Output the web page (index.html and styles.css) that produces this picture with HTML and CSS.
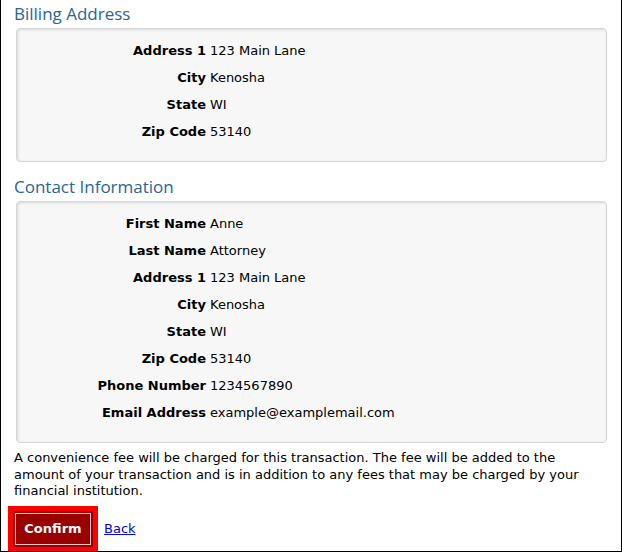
FILE: index.html
```html
<!DOCTYPE html>
<html>
<head>
<meta charset="utf-8">
<link rel="stylesheet" href="styles.css">
</head>
<body>
<div class="page">
  <h2 class="section-title">Billing Address</h2>
  <div class="panel">
    <div class="row"><span class="label">Address 1</span><span class="value">123 Main Lane</span></div>
    <div class="row"><span class="label">City</span><span class="value">Kenosha</span></div>
    <div class="row"><span class="label">State</span><span class="value">WI</span></div>
    <div class="row"><span class="label">Zip Code</span><span class="value">53140</span></div>
  </div>
  <h2 class="section-title">Contact Information</h2>
  <div class="panel">
    <div class="row"><span class="label">First Name</span><span class="value">Anne</span></div>
    <div class="row"><span class="label">Last Name</span><span class="value">Attorney</span></div>
    <div class="row"><span class="label">Address 1</span><span class="value">123 Main Lane</span></div>
    <div class="row"><span class="label">City</span><span class="value">Kenosha</span></div>
    <div class="row"><span class="label">State</span><span class="value">WI</span></div>
    <div class="row"><span class="label">Zip Code</span><span class="value">53140</span></div>
    <div class="row"><span class="label">Phone Number</span><span class="value">1234567890</span></div>
    <div class="row"><span class="label">Email Address</span><span class="value">example@examplemail.com</span></div>
  </div>
  <p class="notice">A convenience fee will be charged for this transaction. The fee will be added to the amount of your transaction and is in addition to any fees that may be charged by your financial institution.</p>
  <div class="actions">
    <button class="confirm" type="button">Confirm</button>
    <a class="back" href="#">Back</a>
  </div>
</div>
</body>
</html>
```

FILE: styles.css
```css
html, body {
  margin: 0;
  padding: 0;
  background: #fff;
}
.page {
  box-sizing: border-box;
  width: 622px;
  height: 552px;
  border: 1px solid #000;
  border-top: none;
  padding: 0 14px 0 13px;
  font-family: "DejaVu Sans", Verdana, sans-serif;
  font-size: 13px;
  color: #000;
  overflow: hidden;
}
.section-title {
  margin: 0;
  padding-top: 4px;
  height: 28px;
  box-sizing: border-box;
  font-family: "Open Sans", "Noto Sans", sans-serif;
  font-weight: normal;
  font-size: 17px;
  line-height: 20px;
  color: #2a6496;
}
.panel + .section-title {
  margin-top: 11px;
}
.panel {
  margin-left: 2px;
  width: 591px;
  box-sizing: border-box;
  background: #f7f7f7;
  border: 1px solid #d6d6d6;
  border-radius: 4px;
  box-shadow: inset 1px 1px 3px rgba(0,0,0,0.12);
  padding: 8px 0 16px;
}
.row {
  display: grid;
  grid-template-columns: 189px 1fr;
  column-gap: 4px;
  height: 27px;
  line-height: 27px;
}
.label {
  text-align: right;
  font-weight: bold;
}
.notice {
  margin: 7px 0 0;
  line-height: 16.5px;
}
.actions {
  display: flex;
  align-items: center;
  gap: 13px;
  margin-top: 13px;
  padding-left: 1px;
}
.confirm {
  width: 76px;
  height: 32px;
  background: #990000;
  color: #fff;
  border: 1px solid #e8c8c8;
  box-shadow: 0 0 0 2px #990000, 0 0 0 7px #ff0000;
  margin: 0;
  font-family: "DejaVu Sans", Verdana, sans-serif;
  font-weight: bold;
  font-size: 13px;
  padding: 0;
}
.back {
  color: #0000ee;
  text-decoration: underline;
}
```
